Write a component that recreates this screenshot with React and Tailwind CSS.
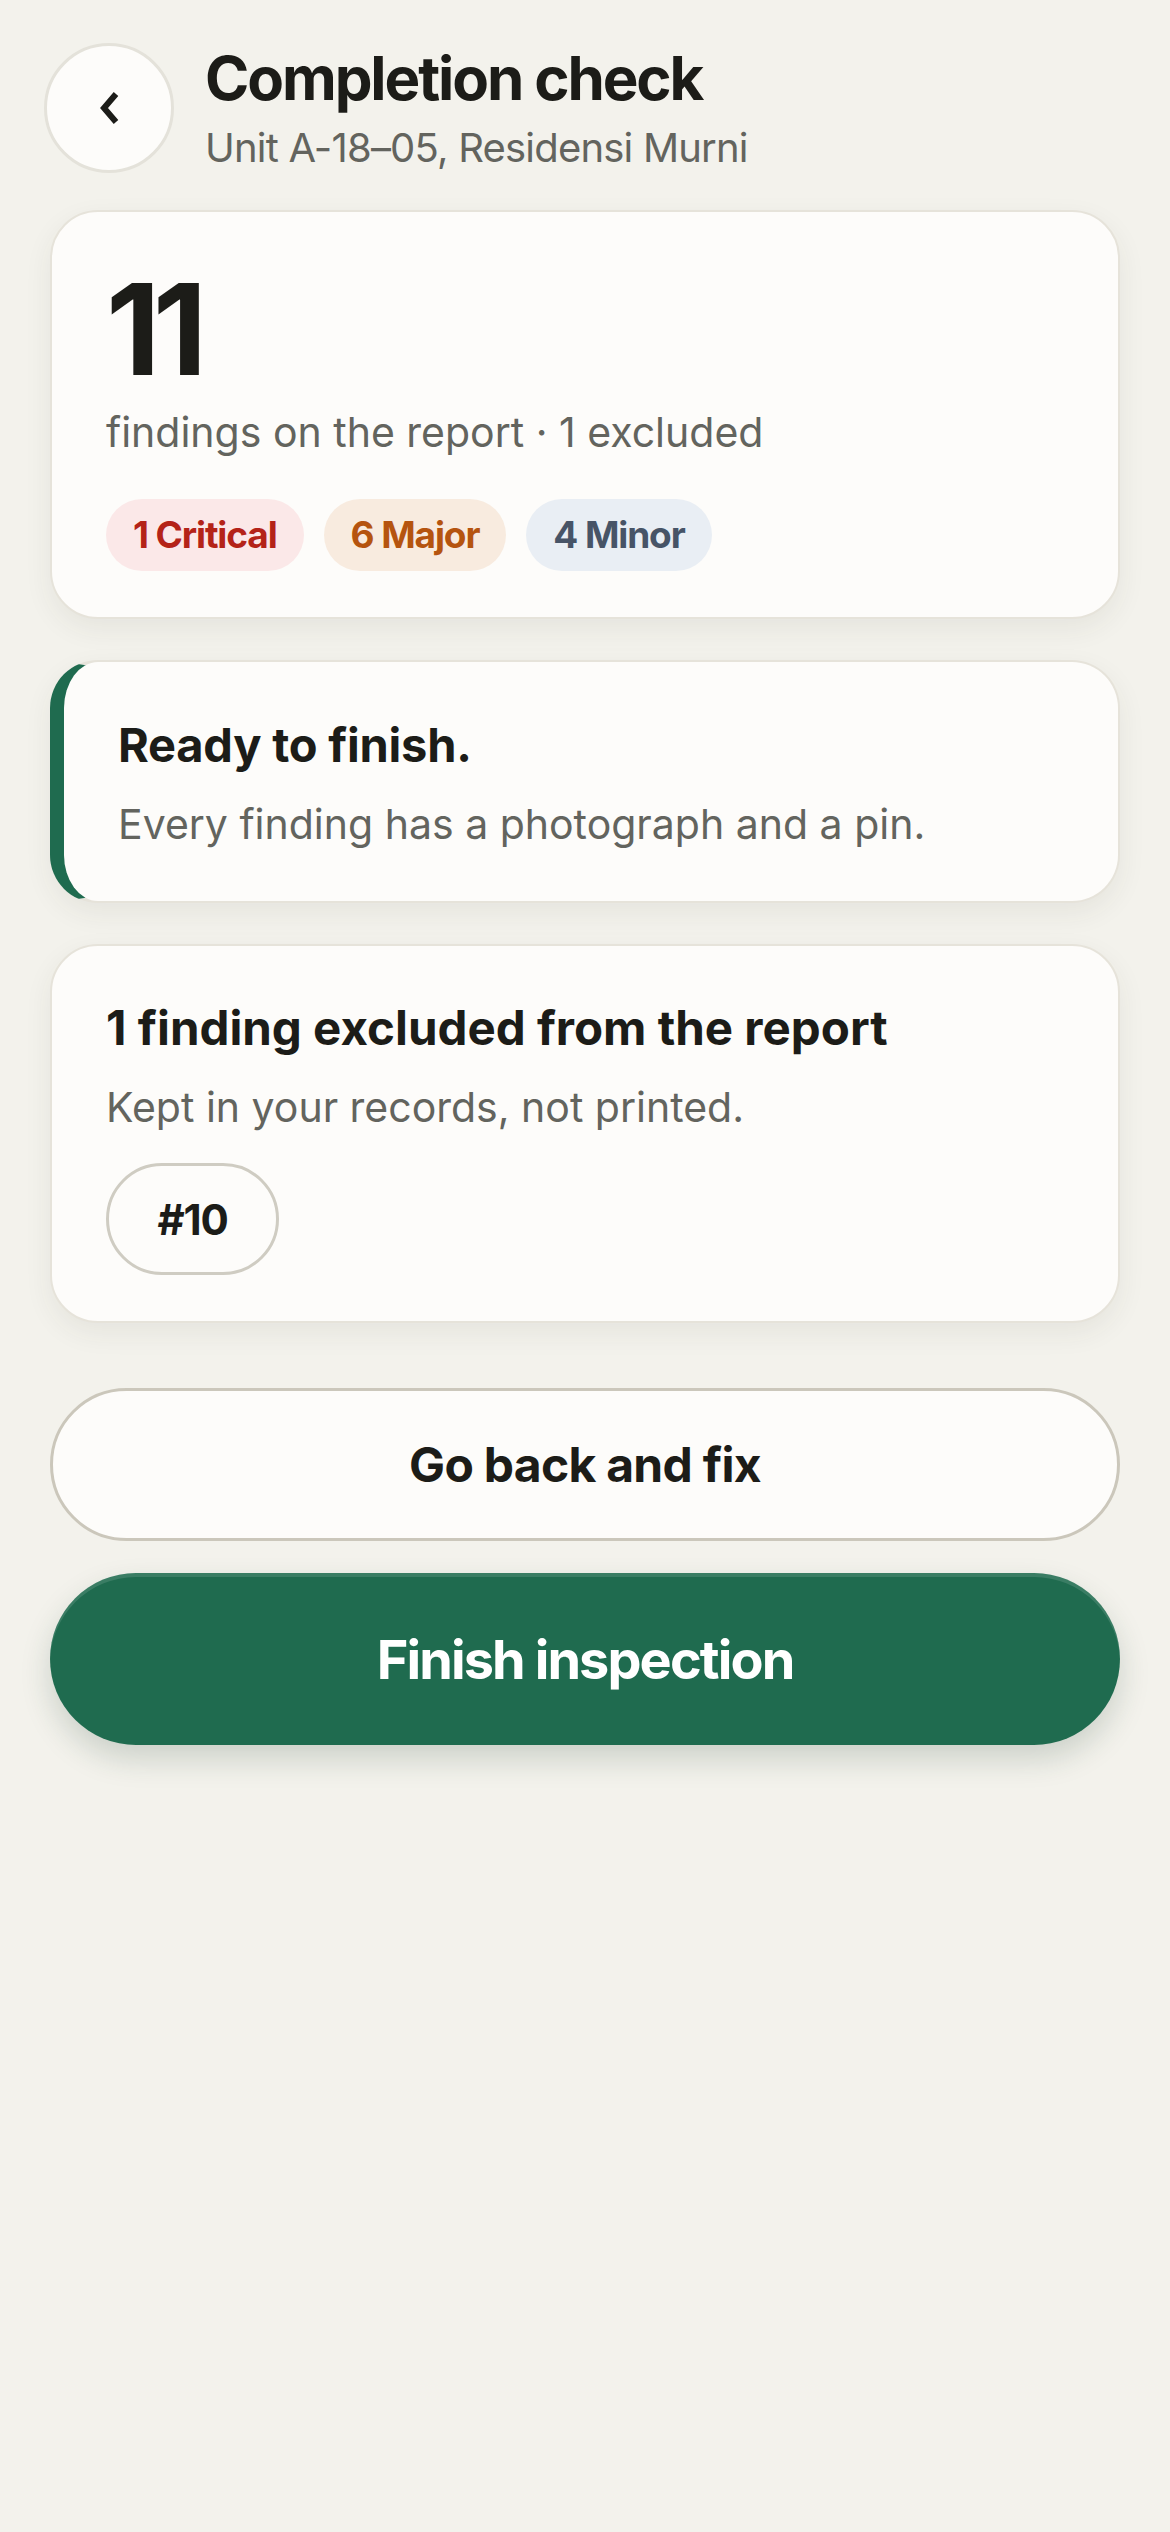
import React from "react";

const font = { fontFamily: "Inter, 'Noto Sans', sans-serif" };

export default function App() {
  return (
    <div className="min-h-[2532px] w-[1170px] bg-[#f3f2ec] px-[50px] pt-[43px]" style={font}>
      <div className="flex items-center">
        <div className="-ml-[6px] flex h-[130px] w-[130px] items-center justify-center rounded-full border-[3px] border-[#e4e2da] bg-[#fdfcfa]">
          <svg width="24" height="34" viewBox="0 0 24 34">
            <polyline points="19,3 7,17 19,31" fill="none" stroke="#1c1c18" strokeWidth="6" strokeLinejoin="miter" strokeLinecap="butt" />
          </svg>
        </div>
        <div className="ml-[31px] flex flex-col">
          <div className="text-[60px] leading-[68px] font-bold tracking-[-0.035em] text-[#1c1c18]">Completion check</div>
          <div className="mt-[12px] text-[40px] leading-[48px] tracking-[-0.02em] text-[#63645e]">Unit A-18–05, Residensi Murni</div>
        </div>
      </div>

      <div className="mt-[37px] rounded-[48px] border-2 border-[#e6e3da] bg-[#fdfcfa] px-[54px] pt-[54px] pb-[46px] shadow-[0_10px_28px_rgba(60,55,40,0.07)]">
        <div className="text-[126px] leading-none font-bold tracking-[-0.06em] text-[#1c1c18]">11</div>
        <div className="mt-[16px] text-[41px] leading-[48px] text-[#63645e]">findings on the report · 1 excluded</div>
        <div className="mt-[43px] flex gap-[20px]">
          <span className="flex h-[72px] items-center rounded-full bg-[#fbe8e8] px-[27px] text-[37px] font-bold tracking-[-0.03em] text-[#b42318]">1 Critical</span>
          <span className="flex h-[72px] items-center rounded-full bg-[#f8ebdf] px-[27px] text-[37px] font-bold tracking-[-0.03em] text-[#b5540f]">6 Major</span>
          <span className="flex h-[72px] items-center rounded-full bg-[#e9eef4] px-[27px] text-[37px] font-bold tracking-[-0.03em] text-[#475467]">4 Minor</span>
        </div>
      </div>

      <div className="mt-[41px] rounded-[48px] border-2 border-l-[14px] border-[#e6e3da] border-l-[#1f6b4f] bg-[#fdfcfa] pr-[54px] pl-[54px] pt-[55px] pb-[53px] shadow-[0_10px_28px_rgba(60,55,40,0.07)]">
        <div className="text-[47px] leading-[56px] font-bold tracking-[-0.005em] text-[#1c1c18]">Ready to finish.</div>
        <div className="mt-[27px] text-[41px] leading-[48px] text-[#63645e]">Every finding has a photograph and a pin.</div>
      </div>

      <div className="mt-[41px] rounded-[48px] border-2 border-[#e6e3da] bg-[#fdfcfa] px-[54px] pt-[54px] pb-[46px] shadow-[0_10px_28px_rgba(60,55,40,0.07)]">
        <div className="text-[47.5px] leading-[56px] font-bold text-[#1c1c18]">1 finding excluded from the report</div>
        <div className="mt-[27px] text-[41px] leading-[48px] text-[#63645e]">Kept in your records, not printed.</div>
        <div className="mt-[32px] flex">
          <span className="flex h-[112px] w-[173px] items-center justify-center rounded-full border-[3px] border-[#cfccc2] text-[42px] font-bold tracking-[-0.03em] text-[#1c1c18]">#10</span>
        </div>
      </div>

      <button className="mt-[65px] flex h-[153px] w-full items-center justify-center rounded-full border-[3px] border-[#cbc7bb] bg-[#fdfcfa] text-[48px] font-bold tracking-[-0.015em] text-[#1c1c18]">
        Go back and fix
      </button>
      <button className="mt-[32px] flex h-[172px] w-full items-center justify-center rounded-full bg-[#1f6b4f] text-[54px] font-bold tracking-[-0.035em] text-white shadow-[inset_0_4px_0_rgba(255,255,255,0.12),0_14px_30px_rgba(30,60,45,0.18)]">
        Finish inspection
      </button>
    </div>
  );
}
